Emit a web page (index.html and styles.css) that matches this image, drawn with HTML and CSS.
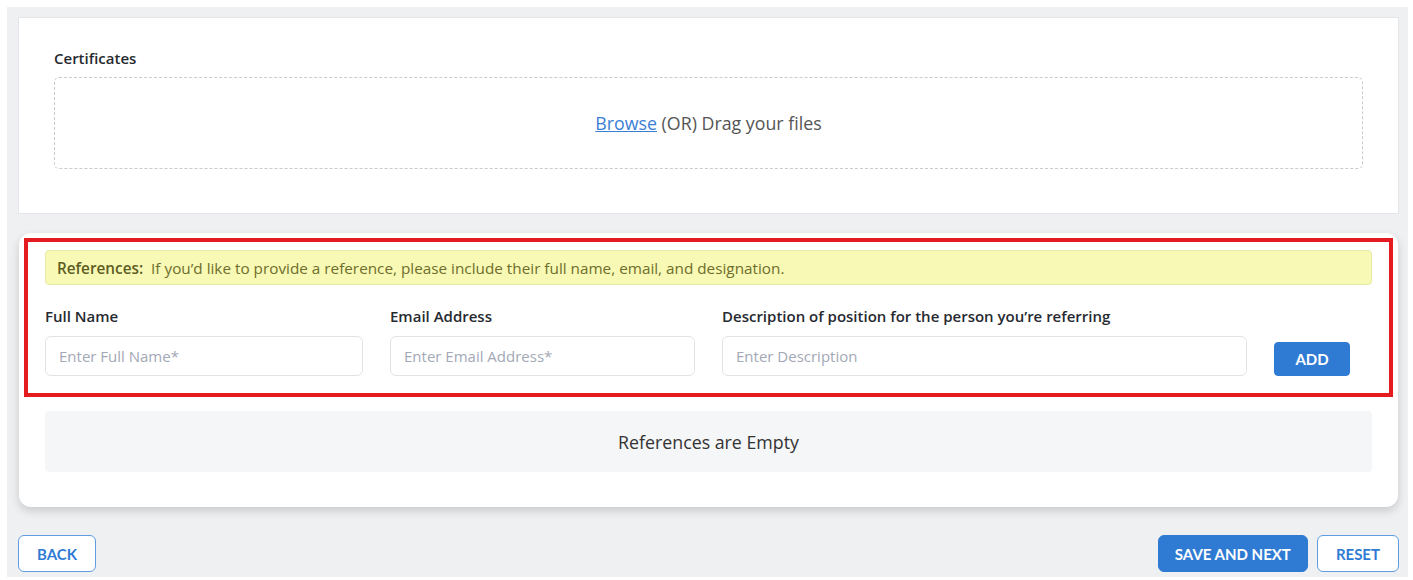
FILE: index.html
```html
<!DOCTYPE html>
<html lang="en">
<head>
    <meta charset="UTF-8">
    <meta name="viewport" content="width=device-width, initial-scale=1.0">
    <title>Application - Documents</title>
    <link rel="stylesheet" href="styles.css">
</head>
<body>
    <div class="page">
        <section class="card card--flat">
            <label class="field-label">Certificates</label>
            <div class="dropzone">
                <a href="#" class="dropzone__link">Browse</a>&nbsp;(OR) Drag your files
            </div>
        </section>

        <section class="card card--raised">
            <div class="ref-form">
                <div class="alert">
                    <strong>References:</strong>&nbsp; If you’d like to provide a reference, please include their full name, email, and designation.
                </div>
                <div class="ref-row">
                    <div class="field">
                        <label class="field-label" for="refName">Full Name</label>
                        <input class="input" id="refName" type="text" placeholder="Enter Full Name*">
                    </div>
                    <div class="field">
                        <label class="field-label" for="refEmail">Email Address</label>
                        <input class="input" id="refEmail" type="email" placeholder="Enter Email Address*">
                    </div>
                    <div class="field">
                        <label class="field-label" for="refDesc">Description of position for the person you’re referring</label>
                        <input class="input" id="refDesc" type="text" placeholder="Enter Description">
                    </div>
                    <button class="btn btn--primary btn--add" type="button">ADD</button>
                </div>
            </div>
            <div class="empty">References are Empty</div>
        </section>

        <div class="actions">
            <button class="btn btn--outline" type="button">BACK</button>
            <div class="actions__right">
                <button class="btn btn--primary" type="button">SAVE AND NEXT</button>
                <button class="btn btn--outline" type="button">RESET</button>
            </div>
        </div>
    </div>
</body>
</html>
```

FILE: styles.css
```css
/* Reset */
* {
    margin: 0;
    padding: 0;
    box-sizing: border-box;
}
body {
    font-family: "Open Sans", "Noto Sans", sans-serif;
    background-color: #ffffff;
    color: #222222;
    padding: 7px 5px 3px 7px;
}
.page {
    background-color: #eff0f2;
    height: 570px;
    padding: 10px 9px 0 11px;
}
.card {
    background-color: #ffffff;
}
.card--flat {
    border: 1px solid #e3e5e8;
    padding: 30px 35px 44px 35px;
}
.card--raised {
    margin: 19px 1px 0 1px;
    border-radius: 12px;
    padding: 5px;
    box-shadow: 0 4px 10px rgba(0, 0, 0, 0.16);
}
.field-label {
    display: block;
    font-size: 15px;
    font-weight: 600;
    line-height: 20px;
    color: #262a30;
    margin-bottom: 9px;
}
.dropzone {
    height: 92px;
    border: 1px dashed #c9cbce;
    border-radius: 5px;
    display: flex;
    align-items: center;
    justify-content: center;
    font-size: 17.8px;
    color: #555555;
}
.dropzone__link {
    color: #3a7fd5;
    text-decoration: underline;
}
.ref-form {
    border: 4px solid #e41c1f;
    padding: 8px 17px 17px 17px;
}
.alert {
    background-color: #f7f9b4;
    border: 1px solid #e6e9a6;
    border-radius: 4px;
    height: 35px;
    padding: 0 11px;
    display: flex;
    align-items: center;
    font-size: 15.3px;
    color: #6e6d2c;
}
.alert strong {
    color: #5e5d24;
    font-weight: 600;
}
.ref-row {
    display: grid;
    grid-template-columns: 318px 305px 525px 1fr;
    gap: 27px;
    align-items: end;
    margin-top: 21px;
}
.ref-row .field-label {
    margin-bottom: 10px;
}
.input {
    width: 100%;
    height: 40px;
    border: 1px solid #e1e3e7;
    border-radius: 6px;
    padding: 0 13px;
    font-family: inherit;
    font-size: 15px;
    color: #222222;
    outline: none;
}
.input::placeholder {
    color: #a3a8b6;
}
.btn {
    font-family: Lato, "Liberation Sans", sans-serif;
    font-size: 15px;
    font-weight: 700;
    height: 37px;
    border-radius: 6px;
    cursor: pointer;
    padding: 0 16px;
}
.btn--primary {
    background-color: #2f7bd4;
    border: 1px solid #2f7bd4;
    color: #ffffff;
}
.btn--outline {
    background-color: #ffffff;
    border: 1px solid #5f9de3;
    color: #2f7bd4;
    padding: 0 18px;
}
.btn--add {
    width: 76px;
    height: 34px;
    border-radius: 4px;
}
.empty {
    margin: 14px 21px 30px 21px;
    height: 61px;
    background-color: #f5f6f8;
    border-radius: 4px;
    display: flex;
    align-items: center;
    justify-content: center;
    font-size: 17.8px;
    color: #333333;
}
.actions {
    display: flex;
    justify-content: space-between;
    margin-top: 28px;
}
.actions__right {
    display: flex;
    gap: 9px;
}
```
